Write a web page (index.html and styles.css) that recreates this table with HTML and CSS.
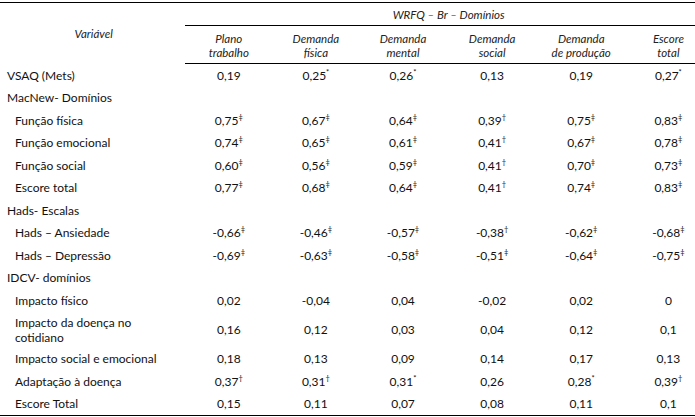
FILE: index.html
```html
<!DOCTYPE html>
<html lang="pt">
<head>
<meta charset="utf-8">
<title>WRFQ – Br – Domínios</title>
<link rel="stylesheet" href="styles.css">
</head>
<body>
<table class="data">
  <colgroup>
    <col class="c-var">
    <col class="c-num"><col class="c-num"><col class="c-num"><col class="c-num4"><col class="c-num"><col class="c-num">
  </colgroup>
  <thead>
    <tr class="h1">
      <th rowspan="2" class="var-h">Variável</th>
      <th colspan="6" class="group-h">WRFQ – Br – Domínios</th>
    </tr>
    <tr class="h2">
      <th>Plano<br>trabalho</th>
      <th>Demanda<br>física</th>
      <th>Demanda<br>mental</th>
      <th>Demanda<br>social</th>
      <th>Demanda<br>de produção</th>
      <th>Escore<br>total</th>
    </tr>
  </thead>
  <tbody>
    <tr><td class="lab">VSAQ (Mets)</td><td>0,19</td><td>0,25<sup>*</sup></td><td>0,26<sup>*</sup></td><td>0,13</td><td>0,19</td><td>0,27<sup>*</sup></td></tr>
    <tr><td class="lab">MacNew- Domínios</td><td></td><td></td><td></td><td></td><td></td><td></td></tr>
    <tr><td class="lab sub">Função física</td><td>0,75<sup>‡</sup></td><td>0,67<sup>‡</sup></td><td>0,64<sup>‡</sup></td><td>0,39<sup>†</sup></td><td>0,75<sup>‡</sup></td><td>0,83<sup>‡</sup></td></tr>
    <tr><td class="lab sub">Função emocional</td><td>0,74<sup>‡</sup></td><td>0,65<sup>‡</sup></td><td>0,61<sup>‡</sup></td><td>0,41<sup>†</sup></td><td>0,67<sup>‡</sup></td><td>0,78<sup>‡</sup></td></tr>
    <tr><td class="lab sub">Função social</td><td>0,60<sup>‡</sup></td><td>0,56<sup>‡</sup></td><td>0,59<sup>‡</sup></td><td>0,41<sup>†</sup></td><td>0,70<sup>‡</sup></td><td>0,73<sup>‡</sup></td></tr>
    <tr><td class="lab sub">Escore total</td><td>0,77<sup>‡</sup></td><td>0,68<sup>‡</sup></td><td>0,64<sup>‡</sup></td><td>0,41<sup>†</sup></td><td>0,74<sup>‡</sup></td><td>0,83<sup>‡</sup></td></tr>
    <tr><td class="lab">Hads- Escalas</td><td></td><td></td><td></td><td></td><td></td><td></td></tr>
    <tr><td class="lab sub">Hads – Ansiedade</td><td>-0,66<sup>‡</sup></td><td>-0,46<sup>‡</sup></td><td>-0,57<sup>‡</sup></td><td>-0,38<sup>†</sup></td><td>-0,62<sup>‡</sup></td><td>-0,68<sup>‡</sup></td></tr>
    <tr><td class="lab sub">Hads – Depressão</td><td>-0,69<sup>‡</sup></td><td>-0,63<sup>‡</sup></td><td>-0,58<sup>‡</sup></td><td>-0,51<sup>‡</sup></td><td>-0,64<sup>‡</sup></td><td>-0,75<sup>‡</sup></td></tr>
    <tr><td class="lab">IDCV- domínios</td><td></td><td></td><td></td><td></td><td></td><td></td></tr>
    <tr><td class="lab sub">Impacto físico</td><td>0,02</td><td>-0,04</td><td>0,04</td><td>-0,02</td><td>0,02</td><td>0</td></tr>
    <tr class="tall"><td class="lab sub">Impacto da doença no<br>cotidiano</td><td>0,16</td><td>0,12</td><td>0,03</td><td>0,04</td><td>0,12</td><td>0,1</td></tr>
    <tr><td class="lab sub">Impacto social e emocional</td><td>0,18</td><td>0,13</td><td>0,09</td><td>0,14</td><td>0,17</td><td>0,13</td></tr>
    <tr><td class="lab sub">Adaptação à doença</td><td>0,37<sup>†</sup></td><td>0,31<sup>†</sup></td><td>0,31<sup>*</sup></td><td>0,26</td><td>0,28<sup>*</sup></td><td>0,39<sup>†</sup></td></tr>
    <tr><td class="lab sub">Escore Total</td><td>0,15</td><td>0,11</td><td>0,07</td><td>0,08</td><td>0,11</td><td>0,1</td></tr>
  </tbody>
</table>
</body>
</html>
```

FILE: styles.css
```css
html, body {
  margin: 0;
  padding: 0;
  background: #fff;
  overflow: hidden;
}
body {
  padding-top: 2px;
  font-family: Lato, "Open Sans", sans-serif;
  color: #111;
}
.data {
  border-collapse: collapse;
  table-layout: fixed;
  width: 712px;
  font-size: 12px;
  line-height: 15px;
  border-top: 1px solid #000;
  border-bottom: 1px solid #000;
}
.c-var { width: 185px; }
.c-num { width: 87px; }
.c-num4 { width: 91px; }
th {
  font-weight: normal;
  font-style: italic;
  color: #222;
  font-size: 11.5px;
  padding: 0;
  text-align: center;
}
.h1 th.group-h {
  height: 22px;
  border-bottom: 1px solid #000;
  vertical-align: middle;
}
.var-h {
  vertical-align: middle;
  padding-left: 2px;
}
.h2 th {
  height: 35px;
  line-height: 14px;
  vertical-align: middle;
  padding-top: 2px;
  border-bottom: 1px solid #000;
}
td {
  height: 22.5px;
  padding: 0;
  text-align: center;
  vertical-align: middle;
  white-space: nowrap;
}
tr.tall td { height: 36px; }
td.lab {
  text-align: left;
  padding-left: 7px;
}
td.lab.sub { padding-left: 15px; }
sup {
  font-size: 7.5px;
  line-height: 0;
  vertical-align: 5px;
}
```
